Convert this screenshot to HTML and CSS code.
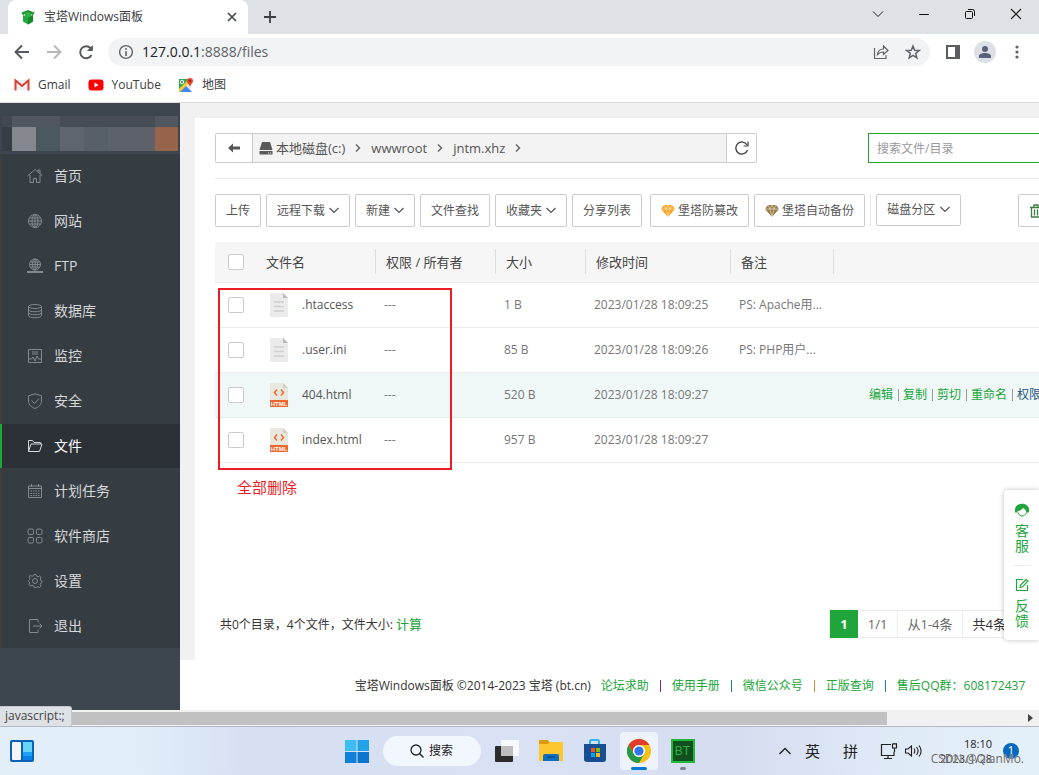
FILE: index.html
```html
<!DOCTYPE html>
<html lang="zh-CN">
<head>
<meta charset="utf-8">
<title>宝塔Windows面板</title>
<link rel="stylesheet" href="styles.css">
</head>
<body>
<svg class="defs" aria-hidden="true">
  <symbol id="chev" viewBox="0 0 10 10"><path d="M.5 2 5 6.500 9.500 2" fill="none" stroke="currentColor" stroke-width="1.200"/></symbol>
  <symbol id="next" viewBox="0 0 8 10"><path d="M2 1.500 5.500 5 2 8.500" fill="none" stroke="#666" stroke-width="1.500"/></symbol>
  <symbol id="gem" viewBox="0 0 14 12"><path d="M3 0h8l3 4-7 8-7-8z" fill="currentColor"/><path d="M0 4h14M3 0l2 4 2 8 2-8 2-4M5 4l2-4 2 4" fill="none" stroke="#fff" stroke-width=".5"/></symbol>
  <symbol id="doc" viewBox="0 0 18 24"><path d="M1 0h12l5 5v18a1 1 0 0 1-1 1H1a1 1 0 0 1-1-1V1a1 1 0 0 1 1-1z" fill="#ebebeb"/><path d="M13 0l5 5h-5z" fill="#b8b8b8"/><path d="M4 9h10M4 13.500h10M4 18h10" stroke="#d0d0d0" stroke-width="1.500"/></symbol>
  <symbol id="html" viewBox="0 0 18 24"><path d="M1 0h12l5 5v13H0V1a1 1 0 0 1 1-1z" fill="#e8e8de"/><path d="M13 0l5 5h-5z" fill="#d0d0c4"/><path d="M7 6.500 4.500 9.500 7 12.500M11 6.500l2.500 3-2.500 3" fill="none" stroke="#ee6c33" stroke-width="1.500"/><path d="M0 17h18v7H0z" fill="#f0652b"/><text x="9" y="22.800" text-anchor="middle" font-size="6" font-weight="700" font-family="Liberation Sans, sans-serif" fill="#fff">HTML</text></symbol>
</svg>

<header class="tabs">
  <div class="tab">
    <svg class="i16" viewBox="0 0 16 16"><path d="M3 6l5 2 5-2v6.500L8 15.500l-5-3z" fill="#27a83b"/><path d="M8 8v7.500l5-3V6z" fill="#168a2b"/><path d="M1.500 3.500 8 1l6.500 2.500-1 2.500L8 4.500 2.500 6z" fill="#1f9a35"/><path d="M5 4.500h6v3l-3 1-3-1z" fill="#2cb446"/></svg>
    <span class="grow">宝塔Windows面板</span>
    <button class="plain" aria-label="关闭标签页"><svg class="i10" viewBox="0 0 10 10"><path d="M1 1l8 8M9 1 1 9" stroke="#45494d" stroke-width="1.700"/></svg></button>
  </div>
  <button class="plain newtab" aria-label="新标签页"><svg class="i12" viewBox="0 0 12 12"><path d="M6 0v12M0 6h12" stroke="#3c4043" stroke-width="1.800"/></svg></button>
  <div class="wctl">
    <button class="plain" aria-label="搜索标签页"><svg class="i12" viewBox="0 0 12 12"><path d="M1 3.500l5 5 5-5" fill="none" stroke="#222"/></svg></button>
    <button class="plain" aria-label="最小化"><svg class="i12" viewBox="0 0 12 12"><path d="M1 6.500h10" stroke="#111"/></svg></button>
    <button class="plain" aria-label="还原"><svg class="i12" viewBox="0 0 12 12"><rect x="1.500" y="3.500" width="7" height="7" rx="1" fill="none" stroke="#111"/><path d="M4 1.500h4.500a2 2 0 0 1 2 2V8" fill="none" stroke="#111"/></svg></button>
    <button class="plain" aria-label="关闭"><svg class="i12" viewBox="0 0 12 12"><path d="M1 1l10 10M11 1 1 11" stroke="#111" stroke-width="1.100"/></svg></button>
  </div>
</header>

<nav class="toolbar">
  <button class="plain" aria-label="后退"><svg class="i16" viewBox="0 0 16 16"><path d="M15 8H2M8 1.500 1.500 8 8 14.500" fill="none" stroke="#55585c" stroke-width="1.900"/></svg></button>
  <button class="plain" aria-label="前进"><svg class="i16" viewBox="0 0 16 16"><path d="M1 8h13M8 1.500 14.500 8 8 14.500" fill="none" stroke="#b5b7ba" stroke-width="1.900"/></svg></button>
  <button class="plain" aria-label="刷新"><svg class="i16" viewBox="0 0 16 16"><path d="M13.500 11A6 6 0 1 1 12.500 4L14 5.500" fill="none" stroke="#55585c" stroke-width="1.900"/><path d="M14.800 1v6h-6z" fill="#55585c"/></svg></button>
  <div class="omni">
    <svg class="i16" viewBox="0 0 16 16"><circle cx="8" cy="8" r="6.400" fill="none" stroke="#5f6368" stroke-width="1.400"/><path d="M8 7.300V12M8 4v1.800" stroke="#5f6368" stroke-width="1.600"/></svg>
    <span class="url"><b>127.0.0.1</b>:8888/files</span>
    <svg class="i16" viewBox="0 0 16 16"><path d="M1.500 4v10.500h11.500V11" fill="none" stroke="#5f6368" stroke-width="1.200"/><path d="M4.500 10.500c.5-4 2.500-5.500 6-5.500V2l4.500 4.500-4.500 4V8c-3 0-4.500.8-6 2.500z" fill="none" stroke="#5f6368" stroke-width="1.200"/></svg>
    <svg class="i16" viewBox="0 0 16 16"><path d="M8 2l1.700 4.200 4.500.3-3.500 2.900 1.100 4.400L8 11.400l-3.800 2.400 1.100-4.400L1.800 6.500l4.500-.3z" fill="none" stroke="#5f6368" stroke-width="1.500"/></svg>
  </div>
  <div class="tools">
    <svg class="i14" viewBox="0 0 14 14"><path d="M0 0h14v14H0z" fill="#5a5e63"/><path d="M2 2h7v10H2z" fill="#fff"/></svg>
    <span class="avatar"><svg class="i12" viewBox="0 0 12 12"><circle cx="6" cy="3" r="3" fill="#57617a"/><path d="M0 12V10c0-2 3-3 6-3s6 1 6 3v2z" fill="#57617a"/></svg></span>
    <svg class="i14" viewBox="0 0 14 14" fill="#5f6368"><circle cx="7" cy="2" r="1.600"/><circle cx="7" cy="7" r="1.600"/><circle cx="7" cy="12" r="1.600"/></svg>
  </div>
</nav>

<nav class="bookmarks">
  <a href="#"><svg class="i16" viewBox="0 0 16 16"><path d="M2 3h12v10H2z" fill="#eee"/><path d="M1.500 13.500v-10L8 9l6.500-5.500v10" fill="none" stroke="#d93f33" stroke-width="2"/></svg>Gmail</a>
  <a href="#"><svg class="i16" viewBox="0 0 16 16"><rect y="2.500" x=".5" width="15" height="11" rx="3" fill="#f00"/><path d="M6.500 5.500v5l4-2.500z" fill="#fff"/></svg>YouTube</a>
  <a href="#"><svg class="i16" viewBox="0 0 16 16"><path d="M1 2h12v13H1z" fill="#34a853"/><path d="M7 9l6-5v11z" fill="#e8e8e8"/><path d="M2 15l6-6 6 6z" fill="#4285f4"/><path d="M1 12 10 3l2 2L2 15H1z" fill="#fbc934"/><circle cx="4" cy="5" r="1.700" fill="none" stroke="#fff"/><path d="M12 10C11.500 7 9 6.500 9 4a3 3 0 0 1 6 0c0 2.500-2.500 3-3 6z" fill="#ea4335"/><circle cx="12" cy="4" r="1" fill="#8e1c14"/></svg>地图</a>
</nav>

<div class="viewport">
  <aside class="sidebar">
    <div class="user" aria-hidden="true">
      <i class="u1"></i><i class="u2"></i><i class="u3"></i><i class="u2"></i>
      <i class="v1"></i><i class="v2"></i><i class="v3"></i><i class="v4"></i><i class="v5"></i><i class="v6"></i><i class="v7"></i>
    </div>
    <nav class="menu">
      <a href="#"><svg viewBox="0 0 16 16"><path d="M.5 8 8 1.500 15.500 8M11 4V2h2v4M3 7v7.500h3.500v-4h3v4H13V7"/></svg>首页</a>
      <a href="#"><svg viewBox="0 0 16 16"><circle cx="8" cy="8" r="6.500"/><ellipse cx="8" cy="8" rx="3" ry="6.500"/><path d="M8 1.500v13M1.500 8h13M2.500 5h11M2.500 11h11"/></svg>网站</a>
      <a href="#"><svg viewBox="0 0 16 16"><circle cx="8" cy="6.500" r="5.500"/><ellipse cx="8" cy="6.500" rx="2.500" ry="5.500"/><path d="M8 1v11M2.500 6.500h11M3.500 4h9M3.500 9h9"/><path d="M0 14h16M6 14h4" stroke-width="2"/></svg>FTP</a>
      <a href="#"><svg viewBox="0 0 16 16"><ellipse cx="8" cy="3.500" rx="6.500" ry="2"/><path d="M1.500 3.500v9c0 3 13 3 13 0v-9M1.500 6.500c0 3 13 3 13 0M1.500 9.500c0 3 13 3 13 0"/></svg>数据库</a>
      <a href="#"><svg viewBox="0 0 16 16"><path d="M1.500 1.500h13v13h-13zM1.500 11h3l1.500-2 2 4 2-5 1.500 3h3M5 4h6M5 6h6"/></svg>监控</a>
      <a href="#"><svg viewBox="0 0 16 16"><path d="M8 .8l6.500 2V8c0 4-3 6-6.500 7.500C4.500 14 1.500 12 1.500 8V2.800zM4.500 7.500l3 3 4.500-5"/></svg>安全</a>
      <a href="#" class="on"><svg viewBox="0 0 16 16"><path d="M1.500 13.500v-11h4l1.500 2h6.500V6M1.500 13.500h11L15 6H4z"/></svg>文件</a>
      <a href="#"><svg viewBox="0 0 16 16"><path d="M1.500 3h13v11.500h-13zM1.500 5.500h13M4.500 1v3M11.500 1v3"/><path d="M3.500 8h9M3.500 10.500h9M3.500 12.500h9" stroke-dasharray="1.500 1"/></svg>计划任务</a>
      <a href="#"><svg viewBox="0 0 16 16"><rect x="1" y="1" width="5.500" height="5.500" rx="1.500"/><rect x="9.500" y="1" width="5.500" height="5.500" rx="1.500"/><rect x="1" y="9.500" width="5.500" height="5.500" rx="1.500"/><rect x="9.500" y="9.500" width="5.500" height="5.500" rx="1.500"/></svg>软件商店</a>
      <a href="#"><svg viewBox="0 0 16 16"><circle cx="8" cy="8" r="2.500"/><path d="M7 1.500h2l.5 1.700 1.500.6 1.600-.8 1.400 1.400-.8 1.600.6 1.500 1.200.5v1.500l-1.200.5-.6 1.500.8 1.600-1.400 1.400-1.600-.8-1.500.6L9 14.500H7l-.5-1.700-1.500-.6-1.600.8L2 11.600l.8-1.600-.6-1L1.500 8.500v-1l1-1L3 5l-.8-1.600L3.400 2.500 5 3.300l1.500-.6z"/></svg>设置</a>
      <a href="#"><svg viewBox="0 0 16 16"><path d="M11 4.500v-3H2.500v13H11v-3M6 8h9M12.500 5.500 15 8l-2.500 2.500"/></svg>退出</a>
    </nav>
  </aside>

  <div class="content">
    <main class="main">
      <section class="card">
        <div class="pathrow">
          <div class="path">
            <button class="box back" aria-label="返回"><svg class="i12" viewBox="0 0 12 12"><path d="M0 6l5-4.500v3h7v3H5v3z" fill="#555"/></svg></button>
            <div class="crumbs">
              <svg class="i14" viewBox="0 0 14 14"><path d="M3 1h8l2.500 8H.5z" fill="#5a5a5a"/><path d="M.5 10h13v3.500H.5z" fill="#5a5a5a"/><path d="M9 12h1M11 12h1" stroke="#fff"/></svg>
              <a href="#">本地磁盘(c:)</a><svg class="sep" viewBox="0 0 8 10"><use href="#next"/></svg>
              <a href="#">wwwroot</a><svg class="sep" viewBox="0 0 8 10"><use href="#next"/></svg>
              <a href="#">jntm.xhz</a><svg class="sep" viewBox="0 0 8 10"><use href="#next"/></svg>
            </div>
            <button class="box reload" aria-label="刷新"><svg class="i14" viewBox="0 0 14 14"><path d="M12.500 9A6 6 0 1 1 12 4" fill="none" stroke="#444" stroke-width="1.400"/><path d="M13 .5v4.500H8.500" fill="none" stroke="#444" stroke-width="1.200"/></svg></button>
          </div>
          <input class="search" type="text" placeholder="搜索文件/目录" aria-label="搜索文件/目录">
        </div>

        <div class="actions">
          <button class="btn">上传</button>
          <button class="btn">远程下载<svg class="i10"><use href="#chev"/></svg></button>
          <button class="btn">新建<svg class="i10"><use href="#chev"/></svg></button>
          <button class="btn">文件查找</button>
          <button class="btn">收藏夹<svg class="i10"><use href="#chev"/></svg></button>
          <button class="btn">分享列表</button>
          <button class="btn gem gap"><svg class="g1"><use href="#gem"/></svg>堡塔防篡改</button>
          <button class="btn gem"><svg class="g2"><use href="#gem"/></svg>堡塔自动备份</button>
          <span class="bar"></span>
          <button class="btn disk">磁盘分区<svg class="i10"><use href="#chev"/></svg></button>
          <button class="btn trash" aria-label="回收站"><svg class="i14" viewBox="0 0 14 14"><path d="M1 3.500h12M5 3V1h4v2M2.500 4v9h9V4M5.500 5.500v6M8.500 5.500v6" fill="none" stroke="#3f7a45" stroke-width="1.300"/></svg></button>
        </div>

        <div class="files">
          <table>
            <colgroup><col class="c1"><col class="c2"><col class="c3"><col class="c4"><col class="c5"><col class="c6"><col></colgroup>
            <thead><tr><th><input type="checkbox" aria-label="全选"></th><th><span>文件名</span></th><th><span>权限 / 所有者</span></th><th><span>大小</span></th><th><span>修改时间</span></th><th><span>备注</span></th><th></th></tr></thead>
            <tbody>
              <tr><td><input type="checkbox" aria-label=".htaccess"></td><td><div class="fn"><svg><use href="#doc"/></svg>.htaccess</div></td><td>---</td><td>1 B</td><td>2023/01/28 18:09:25</td><td>PS: Apache用...</td><td></td></tr>
              <tr><td><input type="checkbox" aria-label=".user.ini"></td><td><div class="fn"><svg><use href="#doc"/></svg>.user.ini</div></td><td>---</td><td>85 B</td><td>2023/01/28 18:09:26</td><td>PS: PHP用户...</td><td></td></tr>
              <tr class="hover"><td><input type="checkbox" aria-label="404.html"></td><td><div class="fn"><svg><use href="#html"/></svg>404.html</div></td><td>---</td><td>520 B</td><td>2023/01/28 18:09:27</td><td></td><td class="ops"><div><a href="#">编辑</a><i></i><a href="#">复制</a><i></i><a href="#">剪切</a><i></i><a href="#">重命名</a><i></i><a href="#" class="perm">权限</a></div></td></tr>
              <tr><td><input type="checkbox" aria-label="index.html"></td><td><div class="fn"><svg><use href="#html"/></svg>index.html</div></td><td>---</td><td>957 B</td><td>2023/01/28 18:09:27</td><td></td><td></td></tr>
            </tbody>
          </table>
          <div class="mark"></div>
          <p class="marktext">全部删除</p>
        </div>

        <div class="pagerow">
          <p>共0个目录，4个文件，文件大小: <a href="#">计算</a></p>
          <div class="pager"><b>1</b><span>1/1</span><span>从1-4条</span><span class="dark">共4条</span></div>
        </div>
      </section>
    </main>
    <footer class="foot">
      <span>宝塔Windows面板 ©2014-2023 宝塔 (bt.cn)</span>
      <a href="#">论坛求助</a><i class="p1"></i><a href="#">使用手册</a><i class="p2"></i><a href="#">微信公众号</a><i class="p3"></i><a href="#">正版查询</a><i class="p4"></i><a href="#">售后QQ群：608172437</a>
    </footer>
  </div>

  <aside class="float">
    <button class="plain"><svg class="i14" viewBox="0 0 14 14"><path d="M0 6C1-1 13-1 14 6v3.500h-2.500C11 7 9 5.500 8 5 6 7.500 4 8 2.500 8v1.500H0z" fill="#20a53a"/><path d="M3 9.500c1 3 3 3.500 4 3.500 2 0 3.500-1 4.500-3.500" fill="none" stroke="#20a53a"/></svg><span>客服</span></button>
    <button class="plain"><svg class="i14" viewBox="0 0 14 14"><path d="M8 1.500H1.500v11h11V7M5 9.500l.5-2.500L11 1.500 13 3 7.500 8.800z" fill="none" stroke="#20a53a" stroke-width="1.200"/></svg><span>反馈</span></button>
  </aside>
</div>

<div class="scroll">
  <span class="status">javascript:;</span>
  <span class="thumb"></span>
  <svg viewBox="0 0 6 8"><path d="M0 0l5 4-5 4z" fill="#444"/></svg>
</div>

<div class="taskbar">
  <div class="tb-left"><svg class="i24" viewBox="0 0 24 24"><rect y="1" width="24" height="22" rx="2" fill="#0a62b4"/><rect x="2" y="3" width="9" height="18" rx="1" fill="#f4f4f4"/><path d="M13 3h9v10h-9z" fill="#68d5fd"/><path d="M13 13h9v4h-9z" fill="#1fa0f5"/><path d="M13 17h9v4h-9z" fill="#0880e8"/></svg></div>
  <div class="tb-mid">
    <svg class="i24" viewBox="0 0 24 24"><path d="M0 1h11.500v11H0z" fill="#3cbcf0"/><path d="M12.500 1H24v11H12.500z" fill="#22a2e8"/><path d="M0 13h11.500v11H0z" fill="#0f80d8"/><path d="M12.500 13H24v11H12.500z" fill="#0a74cf"/></svg>
    <button class="find"><svg class="i14" viewBox="0 0 14 14"><circle cx="6" cy="6" r="5" fill="none" stroke="#222" stroke-width="1.300"/><path d="M9.500 9.500l4 4" stroke="#222" stroke-width="1.400"/></svg>搜索</button>
    <svg class="i24" viewBox="0 0 24 24"><rect y="7" width="18" height="16" rx="1" fill="#2c2c2c"/><rect x="6" y="1" width="18" height="16" rx="1" fill="#fff" fill-opacity=".8"/><path d="M6 7h12v10H6z" fill="#bdbdbd"/></svg>
    <svg class="i24" viewBox="0 0 24 24"><path d="M0 2a1 1 0 0 1 1-1h8l2 3v4H0z" fill="#dd9a0b"/><path d="M0 5h9l2-2h12a1 1 0 0 1 1 1v18H0z" fill="#fdc730"/><path d="M4 22v-5a2 2 0 0 1 2-2h12a2 2 0 0 1 2 2v5z" fill="#0f6fbe"/><path d="M8 18h8" stroke="#064c8c" stroke-width="1.500"/></svg>
    <svg class="i24" viewBox="0 0 24 24"><path d="M7 6V2.500A1.500 1.500 0 0 1 8.500 1h6A1.500 1.500 0 0 1 16 2.500V6" fill="none" stroke="#2fb5f3" stroke-width="2"/><path d="M1 5h22v15a3 3 0 0 1-3 3H4a3 3 0 0 1-3-3z" fill="#174f92"/><path d="M8 9h4v4H8z" fill="#f35325"/><path d="M13 9h4v4h-4z" fill="#81bc06"/><path d="M8 14h4v4H8z" fill="#05a6f0"/><path d="M13 14h4v4h-4z" fill="#ffba08"/></svg>
    <span class="tile"><svg class="i24" viewBox="0 0 24 24"><circle cx="12" cy="12" r="12" fill="#fbc116"/><path d="M1.600 6A12 12 0 0 1 22.400 6H12a6 6 0 0 0-5.200 9z" fill="#e33b2e"/><path d="M1.600 6A12 12 0 0 0 12 24l5.200-9A6 6 0 0 1 6.800 15z" fill="#229a4a"/><circle cx="12" cy="12" r="6" fill="#fff"/><circle cx="12" cy="12" r="4.600" fill="#2f78ea"/></svg></span>
    <span class="bt">BT</span>
  </div>
  <div class="tray">
    <svg class="i14" viewBox="0 0 14 14"><path d="M1.500 10 7 4.500l5.500 5.500" fill="none" stroke="#222" stroke-width="1.400"/></svg>
    <span class="ime">英</span><span class="ime">拼</span>
    <span class="net"><svg class="i18" viewBox="0 0 18 18"><path d="M11 2.500H1.500v11H14V10M4 16.500h8M8 14v2.500" fill="none" stroke="#222" stroke-width="1.200"/><path d="M12.500 2h4v4h-4zM14.500 6v4M14 1v1M16 1v1" fill="none" stroke="#222" stroke-width="1.200"/></svg>
    <svg class="i18" viewBox="0 0 18 18"><path d="M1.500 7h2.500l3.500-3v10L4 11H1.500zM10 6.500c1 1.500 1 3.500 0 5M12.500 5c2 2.500 2 5.500 0 8M15 3.500c2.700 3.500 2.700 7.500 0 11" fill="none" stroke="#222" stroke-width="1.100"/></svg></span>
    <span class="clock">18:10<br>2023/1/28</span>
    <span class="badge">1</span>
    <span class="wm">CSDN @QianMo.</span>
  </div>
</div>
</body>
</html>
```

FILE: styles.css
```css
* { box-sizing: border-box; }
body {
  margin: 0; height: 100vh; overflow: hidden; display: flex; flex-direction: column;
  background: #fff; color: #333;
  font: 12px/18px "Open Sans", "Noto Sans CJK SC", sans-serif;
}
button, input { font: inherit; color: inherit; margin: 0; }
button { padding: 0; cursor: pointer; }
a { color: inherit; text-decoration: none; }
p { margin: 0; }
svg { display: block; flex: none; }
.defs { position: absolute; width: 0; height: 0; }
.plain { border: 0; background: none; display: flex; align-items: center; justify-content: center; }
.grow { flex: 1; }
.i10 { width: 10px; height: 10px; }
.i12 { width: 12px; height: 12px; }
.i14 { width: 14px; height: 14px; }
.i16 { width: 16px; height: 16px; }
.i18 { width: 18px; height: 18px; }
.i24 { width: 24px; height: 24px; }

/* browser frame */
.tabs { flex: none; height: 34px; background: #dee1e6; display: flex; align-items: stretch; padding-left: 8px; }
.tab { width: 240px; background: #fff; border-radius: 8px 8px 0 0; display: flex; align-items: center; gap: 8px; padding: 0 11px 0 12px; color: #3c4043; }
.newtab { width: 44px; }
.wctl { margin-left: auto; display: flex; }
.wctl .plain { width: 46px; padding-bottom: 6px; }
.toolbar { flex: none; height: 36px; display: flex; align-items: center; gap: 16px; padding-left: 14px; }
.omni { flex: 1; height: 28px; margin-left: -2px; border-radius: 14px; background: #f1f3f4; display: flex; align-items: center; gap: 16px; padding: 0 9px 0 10px; }
.url { flex: 1; margin-left: -8px; font-size: 14px; color: #5f6368; }
.url b { font-weight: 400; color: #202124; }
.tools { display: flex; align-items: center; gap: 14px; padding-right: 15px; }
.avatar { width: 22px; height: 22px; border-radius: 50%; background: #dde1e7; display: flex; align-items: center; justify-content: center; }
.bookmarks { flex: none; height: 33px; border-bottom: 1px solid #d9dbde; display: flex; align-items: center; gap: 17px; padding: 0 14px 2px; color: #3c4043; }
.bookmarks a { display: flex; align-items: center; gap: 8px; }

/* panel */
.viewport { flex: 1; min-height: 0; position: relative; display: flex; overflow: hidden; }
.sidebar { flex: none; width: 180px; background: #3d454e; padding-top: 13px; }
.user { display: grid; grid-template-columns: 10px 24px 24px 24px 24px 47px 23px; grid-template-rows: 11px 24px; padding: 0 2px; margin-bottom: 3px; }
.u1 { background: #414850; }
.u2 { background: #50575e; grid-column: span 2; }
.u3 { background: #464d55; grid-column: span 3; }
.u3 + .u2 { grid-column: span 1; }
.v1 { background: #363d45; }
.v2 { background: #84878e; }
.v3 { background: #4c5860; }
.v4 { background: #5f656d; }
.v5 { background: #566066; }
.v6 { background: #5d6169; }
.v7 { background: #98634b; }
.menu { background: #353c42; border-left: 2px solid #403f3f; }
.menu a { height: 44px; margin-bottom: 1px; display: flex; align-items: center; gap: 11px; padding-left: 25px; font-size: 14px; color: #d5d7d9; }
.menu svg { width: 16px; height: 16px; fill: none; stroke: #858a8e; }
.menu .on { margin-left: -2px; border-left: 2px solid #20a53a; background: #2c3138; color: #fff; }
.menu .on svg { stroke: #d5d7d9; }
.content { flex: 1 0 1020px; display: flex; flex-direction: column; }
.main { flex: 1; background: #f1f1f1; padding: 15px 15px 0; display: flex; }
.card { flex: 1; background: #fff; padding: 15px 20px 0; display: flex; flex-direction: column; }
.pathrow { display: flex; justify-content: space-between; padding-bottom: 15px; border-bottom: 1px solid #ececec; }
.path { width: 542px; height: 30px; display: flex; border: 1px solid #ccc; border-radius: 2px; }
.box { border: 0; background: #fff; display: flex; align-items: center; justify-content: center; }
.back { width: 37px; border-right: 1px solid #ccc; }
.reload { width: 30px; border-left: 1px solid #ccc; }
.crumbs { flex: 1; background: #f3f3f3; display: flex; align-items: center; padding-left: 6px; font-size: 13px; color: #555; }
.crumbs .i14 { margin-right: 3px; }
.sep { width: 8px; height: 10px; margin: 0 9px; }
.search { width: 297px; height: 30px; border: 1px solid #20a53a; padding: 0 8px; background: #fff; }
.search::placeholder { color: #999; opacity: 1; }
.actions { display: flex; gap: 5px; padding: 15px 0; }
.btn { height: 33px; border: 1px solid #ccc; border-radius: 2px; background: #fff; padding: 0 10px; display: flex; align-items: center; gap: 4px; color: #555; white-space: nowrap; }
.gem { gap: 3px; }
.gem svg { width: 14px; height: 12px; }
.gap { margin-left: 3px; }
.g1 { color: #f9a11b; }
.g2 { color: #9a7b45; }
.bar { width: 1px; height: 32px; background: #e6e6e6; }
.disk { height: 32px; gap: 5px; }
.trash { width: 147px; margin-left: auto; }
.files { position: relative; flex: 1; }
table { width: 100%; table-layout: fixed; border-collapse: collapse; }
.c1 { width: 41px; }
.c2 { width: 120px; }
.c3 { width: 120px; }
.c4 { width: 90px; }
.c5 { width: 145px; }
.c6 { width: 103px; }
th, td { padding: 0 0 0 8px; text-align: left; white-space: nowrap; border-bottom: 1px solid #ececec; }
th { height: 40px; background: #f6f6f6; font-size: 13px; font-weight: 400; color: #444; padding-left: 0; }
th span { display: block; height: 25px; line-height: 26px; padding-left: 10px; border-right: 1px solid #ddd; }
th:first-child, td:first-child { padding-left: 13px; }
td { height: 45px; color: #777; }
input[type="checkbox"] { appearance: none; display: block; width: 16px; height: 16px; border: 1px solid #ccc; border-radius: 2px; background: #fff; }
.fn { display: flex; align-items: center; gap: 14px; padding-left: 6px; color: #555; }
.fn svg { width: 18px; height: 24px; }
.hover td { background: #eff8f7; border-bottom-color: #dcedea; }
.ops { padding-left: 35px; }
.ops div { display: flex; align-items: center; gap: 5px; }
.ops i { width: 1px; height: 12px; margin-right: -1px; background: #999; }
.ops a { color: #20a53a; }
.ops .perm { color: #23527c; }
.mark { position: absolute; left: 3px; top: 46px; width: 234px; height: 182px; border: 2px solid #ed1c24; pointer-events: none; }
.marktext { padding: 13px 0 0 22px; font-size: 15px; line-height: 22px; color: #ed1c24; }
.pagerow { display: flex; justify-content: space-between; align-items: center; padding: 0 148px 22px 5px; }
.pagerow a { color: #20a53a; font-size: 13px; }
.pager { display: flex; height: 28px; line-height: 26px; font-size: 13px; color: #666; border: 1px solid #ececec; }
.pager b { width: 28px; margin: -1px 0; line-height: 28px; text-align: center; background: #20a53a; color: #fff; }
.pager span { padding: 0 9px 0 10px; border-right: 1px solid #ececec; }
.dark { color: #333; }
.foot { flex: none; height: 50px; padding-top: 2px; background: #fff; display: flex; justify-content: center; align-items: center; }
.foot span { margin-right: 10px; }
.foot a { color: #20a53a; }
.foot i { width: 1px; height: 12px; margin: 0 11px; }
.p1 { background: #7a2a80; }
.p2 { background: #2a7f7a; }
.p3 { background: #e08a30; }
.p4 { background: #1b7fc0; }
.float { position: absolute; right: 0; bottom: 70px; width: 35px; background: #fff; border-radius: 4px 0 0 4px; box-shadow: 0 0 5px rgba(0, 0, 0, .25); padding: 0 9px; }
.float .plain { flex-direction: column; gap: 6px; width: 18px; height: 75px; color: #20a53a; font-size: 14px; line-height: 15px; }
.float .plain + .plain { border-top: 1px solid #ececec; }

/* bottom edge of the browser */
.scroll { flex: none; position: relative; height: 17px; background: #f1f1f1; border-bottom: 1px solid #b4b8c4; display: flex; align-items: center; justify-content: space-between; padding: 0 5px 0 17px; }
.thumb { width: 85.5%; height: 13px; background: #c1c1c1; }
.scroll svg { width: 6px; height: 8px; }
.status { position: absolute; left: 0; bottom: 0; height: 20px; padding: 0 6px 0 5px; border-radius: 0 3px 0 0; background: #dee1e6; border: 1px solid #c3c6cc; border-width: 1px 1px 0 0; color: #444; }

/* taskbar */
.taskbar { flex: none; height: 48px; display: grid; grid-template-columns: 1fr auto 1fr; align-items: center; background: linear-gradient(90deg, #e2eef8 0, #e0edf8 14%, #d6def2 25%, #d9e2f5 50%, #d6dcef 70%, #dfeaf7 86%, #e4f0f9 100%); }
.tb-left { padding-left: 10px; }
.tb-mid { display: flex; align-items: center; gap: 20px; }
.find { width: 98px; height: 30px; margin: 0 -6px; border: 0; border-radius: 15px; background: #f2f6fd; display: flex; align-items: center; justify-content: center; gap: 5px; color: #222; }
.tile { position: relative; width: 38px; height: 38px; margin: 0 -7px; border-radius: 4px; background: #edf2fb; display: flex; align-items: center; justify-content: center; }
.tile::after { content: ""; position: absolute; left: 11px; bottom: 0; width: 16px; height: 3px; border-radius: 2px; background: #0a78d4; }
.bt { position: relative; width: 24px; height: 24px; background: #10501d; border: 2px solid #23b83c; color: #28b444; text-align: center; line-height: 20px; font-family: "Liberation Sans", sans-serif; }
.bt::after { content: ""; position: absolute; left: 7px; bottom: -9px; width: 6px; height: 3px; border-radius: 2px; background: #7c828c; }
.tray { position: relative; display: flex; align-items: center; justify-content: flex-end; padding-right: 20px; color: #222; }
.ime { font-size: 15px; margin-left: 13px; }
.ime + .ime { margin-left: 23px; }
.net { display: flex; gap: 6px; margin: 0 25px 0 22px; }
.clock { width: 64px; margin-left: -19px; font-size: 11px; line-height: 15px; text-align: right; }
.badge { width: 16px; height: 16px; margin-left: 11px; border-radius: 50%; background: #0467c0; color: #fff; line-height: 16px; text-align: center; }
.wm { position: absolute; right: 15px; bottom: -1px; line-height: 16px; color: #666; text-shadow: 0 0 1px #fff; }
```
